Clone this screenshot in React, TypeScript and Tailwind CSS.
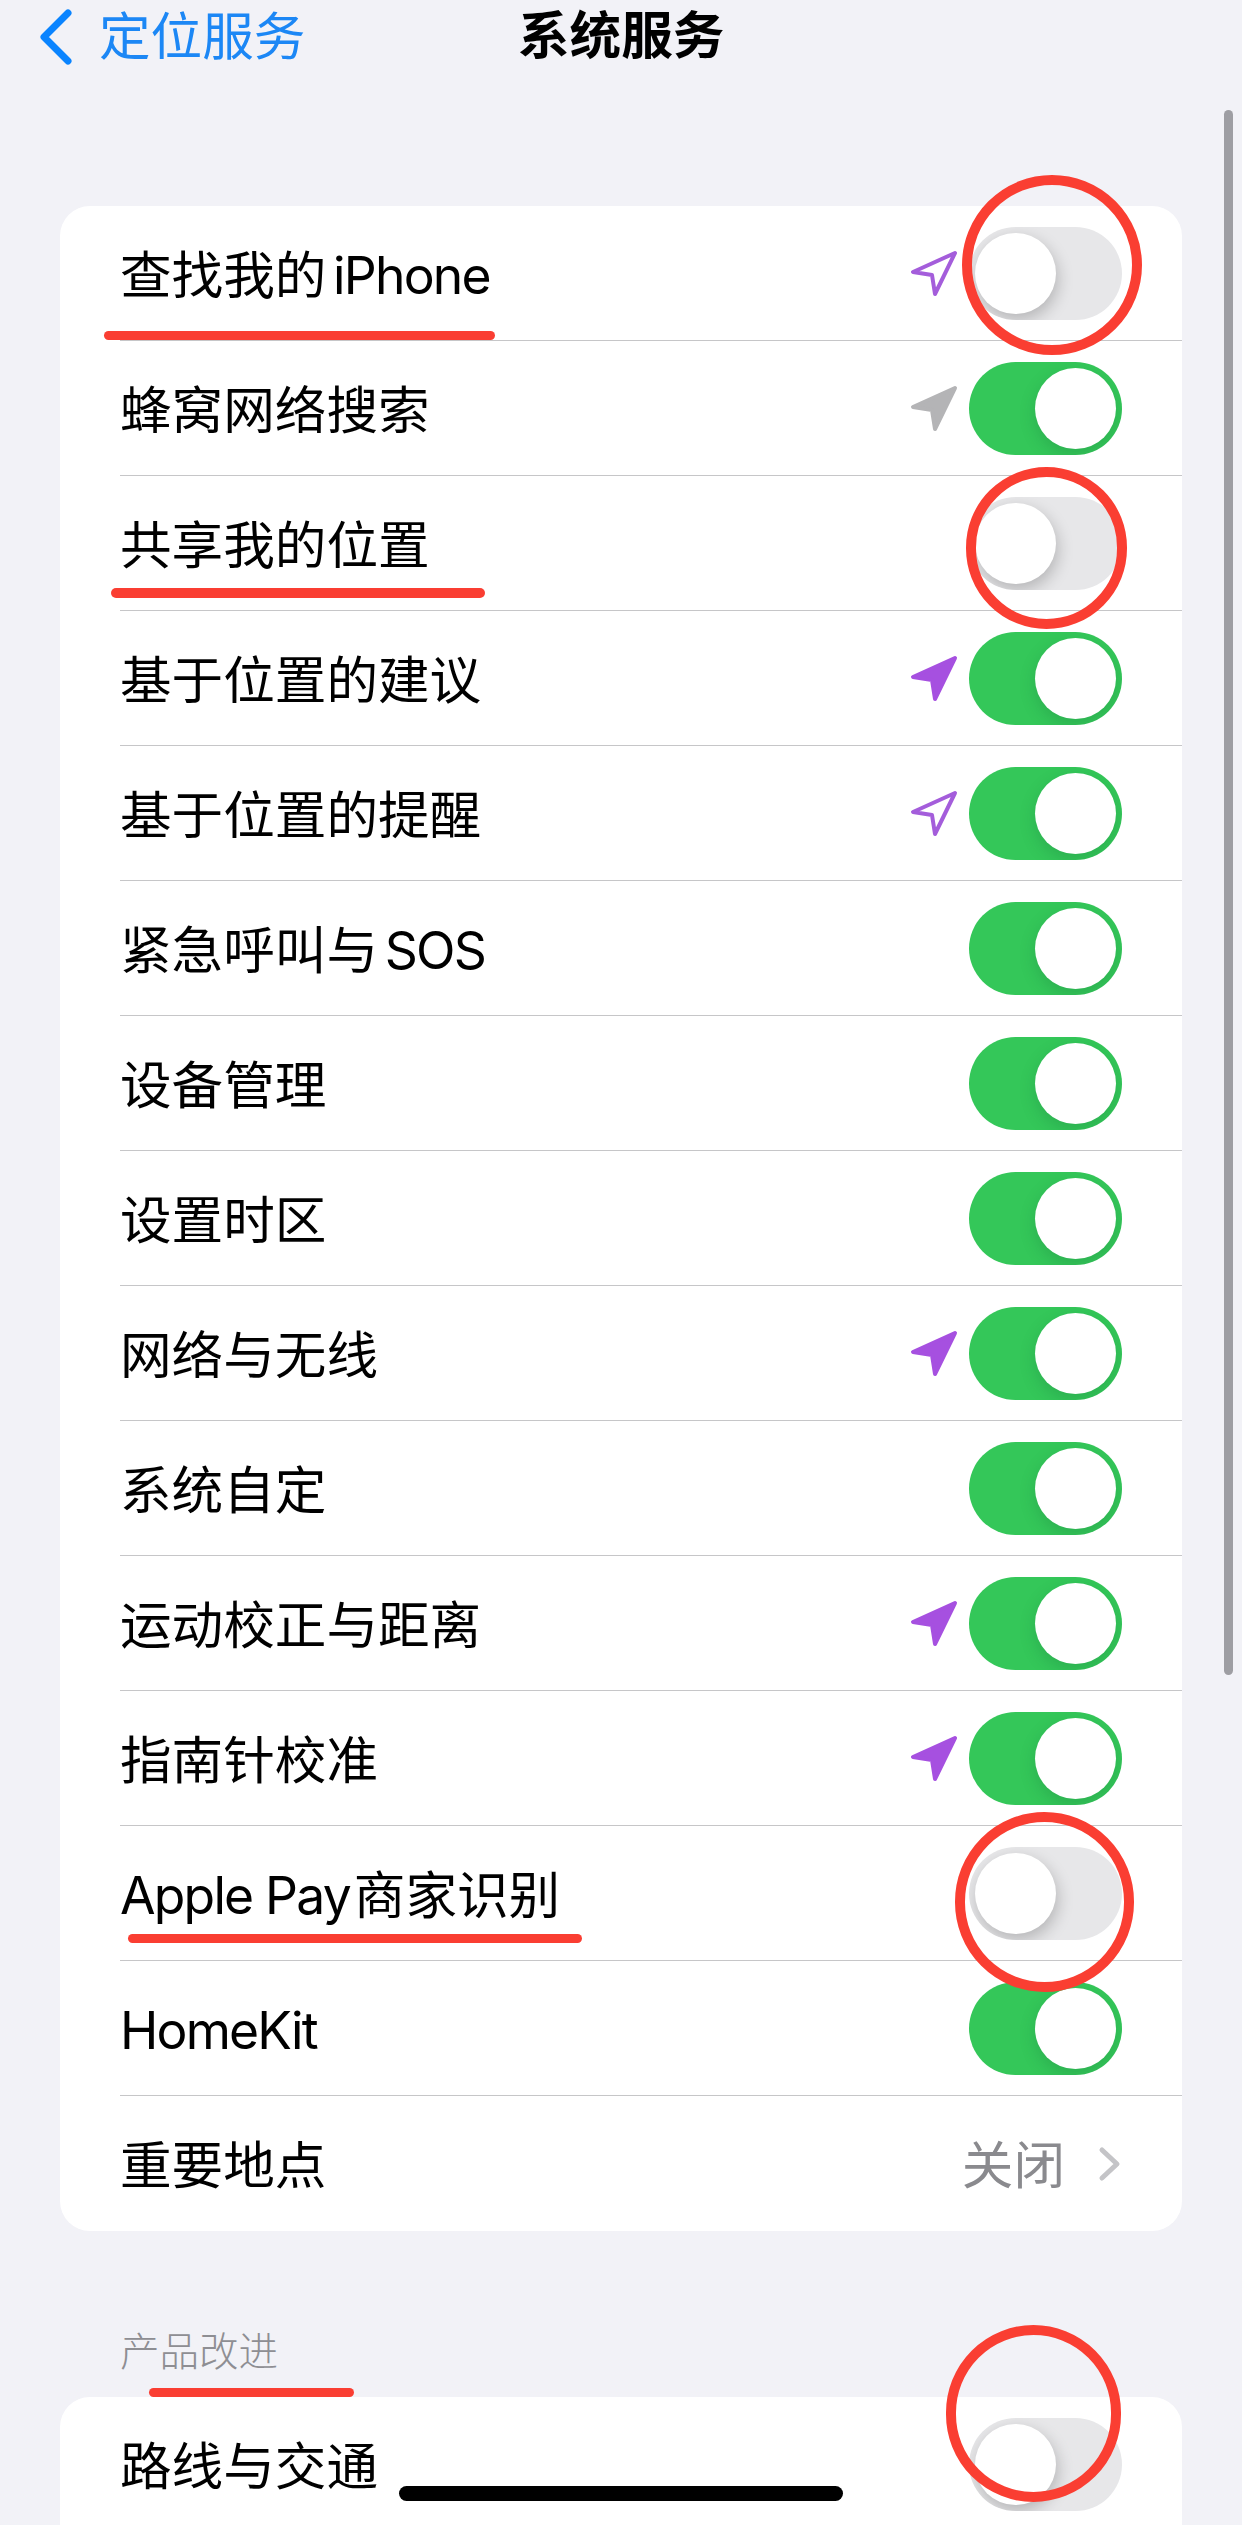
const rows: { label: string; icon?: "outline" | "gray" | "purple"; on?: boolean; value?: string }[] = [
  { label: "查找我的 iPhone", icon: "outline", on: false },
  { label: "蜂窝网络搜索", icon: "gray", on: true },
  { label: "共享我的位置", on: false },
  { label: "基于位置的建议", icon: "purple", on: true },
  { label: "基于位置的提醒", icon: "outline", on: true },
  { label: "紧急呼叫与 SOS", on: true },
  { label: "设备管理", on: true },
  { label: "设置时区", on: true },
  { label: "网络与无线", icon: "purple", on: true },
  { label: "系统自定", on: true },
  { label: "运动校正与距离", icon: "purple", on: true },
  { label: "指南针校准", icon: "purple", on: true },
  { label: "Apple Pay商家识别", on: false },
  { label: "HomeKit", on: true },
  { label: "重要地点", value: "关闭" },
];

function Label({ text }: { text: string }) {
  const parts = text.split(/([A-Za-z ]+)/).filter(Boolean);
  return (
    <span className="pt-[5px] text-[51.6px] leading-none text-black">
      {parts.map((p, i) => {
        if (/[A-Za-z ]/.test(p)) {
          return (
            <span key={i} className={p.startsWith(" ") ? "ml-[-6px] tracking-[-1.8px]" : "tracking-[-1.8px]"}>
              {p}
            </span>
          );
        }
        return (
          <span key={i} className={i > 0 ? "ml-[4px]" : ""}>
            {p}
          </span>
        );
      })}
    </span>
  );
}

function Arrow({ kind }: { kind: "outline" | "gray" | "purple" }) {
  const d = "M46 4 L4 23 L23 26 L26 45 Z";
  if (kind === "outline") {
    return (
      <svg viewBox="0 0 50 48" className="h-[48px] w-[50px]">
        <path d={d} fill="none" stroke="#a45ddb" strokeWidth="4" strokeLinejoin="round" />
      </svg>
    );
  }
  const color = kind === "gray" ? "#b4b4b6" : "#a650e0";
  return (
    <svg viewBox="0 0 50 48" className="h-[48px] w-[50px]">
      <path d={d} fill={color} stroke={color} strokeWidth="4" strokeLinejoin="round" />
    </svg>
  );
}

function Toggle({ on }: { on: boolean }) {
  return (
    <div
      className={
        on
          ? "flex h-[93px] w-[153px] items-center justify-end overflow-hidden rounded-full bg-[#34c759] p-[6px]"
          : "flex h-[93px] w-[153px] items-center justify-start overflow-hidden rounded-full bg-[#e7e7e9] p-[6px]"
      }
    >
      <div
        className={
          on
            ? "h-[81px] w-[81px] rounded-full bg-white shadow-[0_6px_16px_rgba(20,90,50,0.22)]"
            : "h-[81px] w-[81px] rounded-full bg-white shadow-[2px_6px_16px_rgba(0,0,0,0.22)]"
        }
      />
    </div>
  );
}

function Row({ row, last }: { row: (typeof rows)[number]; last: boolean }) {
  return (
    <div className="flex h-[135px] items-stretch pl-[60px]">
      <div
        className={
          last
            ? "flex flex-1 items-center justify-between pr-[60px]"
            : "flex flex-1 items-center justify-between border-b border-[#c6c6c8] pr-[60px]"
        }
      >
        <Label text={row.label} />
        {row.value ? (
          <div className="flex items-center">
            <span className="pt-[5px] text-[51.6px] leading-none text-[#8a8a8e]">{row.value}</span>
            <svg viewBox="0 0 24 36" className="ml-[33px] h-[36px] w-[24px]">
              <path d="M4 4 L19 18 L4 32" fill="none" stroke="#c4c4c7" strokeWidth="5" strokeLinecap="round" strokeLinejoin="round" />
            </svg>
          </div>
        ) : (
          <div className="flex items-center gap-[10px]">
            {row.icon ? <Arrow kind={row.icon} /> : null}
            {row.on !== undefined ? <Toggle on={row.on} /> : null}
          </div>
        )}
      </div>
    </div>
  );
}

const rings = [
  "left-[962px] top-[175px] h-[180px] w-[180px]",
  "left-[966px] top-[467px] h-[162px] w-[161px]",
  "left-[955px] top-[1812px] h-[180px] w-[179px]",
  "left-[946px] top-[2325px] h-[177px] w-[175px]",
];

const underlines = [
  "left-[104px] top-[331px] h-[9px] w-[391px]",
  "left-[111px] top-[588px] h-[10px] w-[374px]",
  "left-[128px] top-[1934px] h-[9px] w-[454px]",
  "left-[149px] top-[2388px] h-[9px] w-[205px]",
];

export default function App() {
  return (
    <div
      className="relative h-[2525px] w-[1242px] overflow-hidden bg-[#f2f2f7]"
      style={{ fontFamily: 'Inter, "Noto Sans CJK SC", sans-serif' }}
    >
      <header className="relative flex h-[73px] items-center pl-[39px]">
        <svg viewBox="0 0 34 56" className="h-[56px] w-[34px]">
          <path d="M29 4 L5 28 L29 52" fill="none" stroke="#0a84ff" strokeWidth="7" strokeLinecap="round" strokeLinejoin="round" />
        </svg>
        <span className="ml-[26px] text-[51.6px] leading-none text-[#1c87f5]">定位服务</span>
        <span className="absolute left-[518px] top-[10px] text-[51.6px] font-bold leading-none text-black">系统服务</span>
      </header>
      <section className="mx-[60px] mt-[133px] overflow-hidden rounded-[30px] bg-white">
        {rows.map((row, i) => (
          <Row key={row.label} row={row} last={i === rows.length - 1} />
        ))}
      </section>
      <h2 className="ml-[120px] mt-[99px] h-[67px] text-[39.5px] font-light leading-[44px] text-[#8e8e93]">产品改进</h2>
      <section className="mx-[60px] overflow-hidden rounded-t-[30px] bg-white">
        <div className="flex h-[135px] items-center justify-between pl-[60px] pr-[60px]">
          <Label text="路线与交通" />
          <Toggle on={false} />
        </div>
      </section>

      <div className="absolute left-[1224px] top-[110px] h-[1565px] w-[9px] rounded-full bg-[#9e9ea3]" />
      {rings.map((c) => (
        <div key={c} className={`absolute rounded-full border-[10px] border-[#fa3e32] ${c}`} />
      ))}
      {underlines.map((c) => (
        <div key={c} className={`absolute rounded-full bg-[#fa3e32] ${c}`} />
      ))}
      <div className="absolute left-[399px] top-[2486px] h-[15px] w-[444px] rounded-full bg-black" />
    </div>
  );
}
